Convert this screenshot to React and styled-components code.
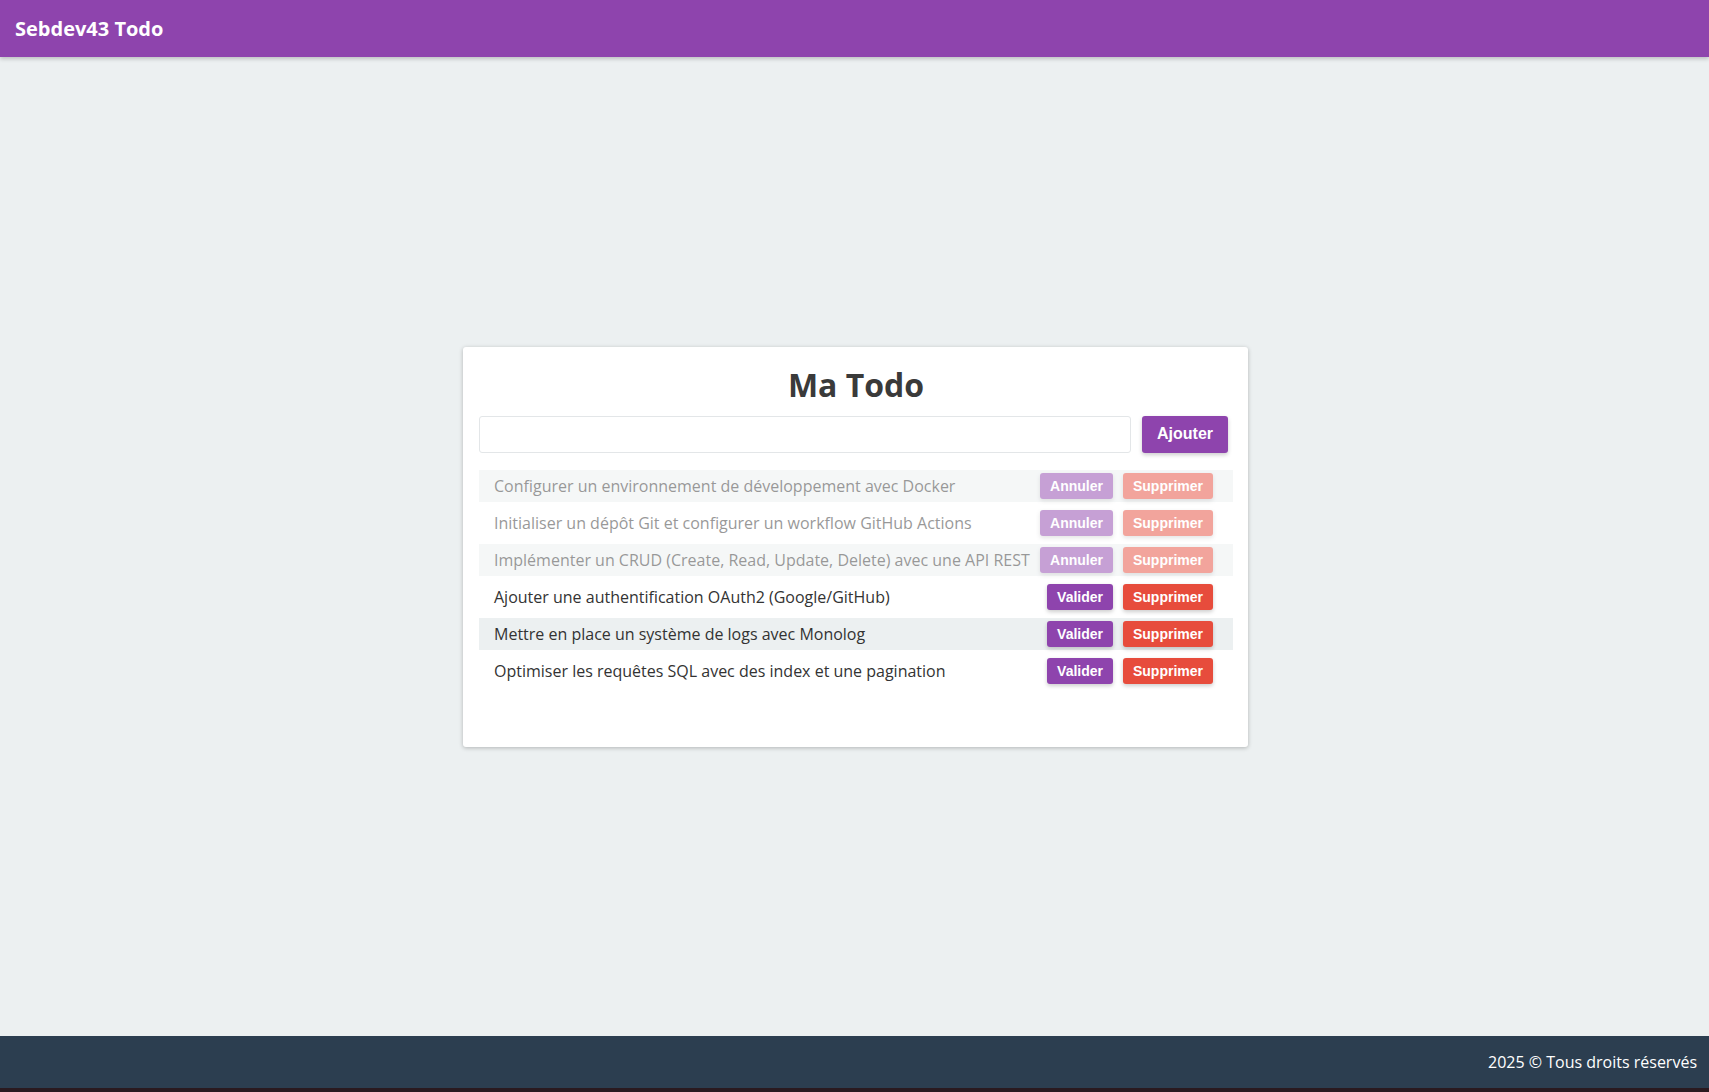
import React, { useState } from 'react';
import styled, { createGlobalStyle } from 'styled-components';

const GlobalStyle = createGlobalStyle`
    html, body {
        margin: 0;
        padding: 0;
        height: 100%;
    }
    body {
        font-family: 'Open Sans', 'Noto Sans', sans-serif;
        background-color: #ecf0f1;
        color: #333;
    }
    #root {
        height: 100%;
    }
`

const Page = styled.div`
    display: flex;
    flex-direction: column;
    height: 100vh;
`

const Header = styled.header`
    height: 57px;
    background-color: #8e44ad;
    display: flex;
    align-items: center;
    padding: 0 15px;
    box-shadow: 0 2px 4px rgba(0, 0, 0, 0.2);
    flex-shrink: 0;
    position: relative;
    z-index: 1;
`

const Brand = styled.h1`
    margin: 0;
    color: #fff;
    font-size: 20px;
    font-weight: 700;
`

const Main = styled.main`
    flex: 1;
    display: flex;
    align-items: center;
    justify-content: center;
    padding-left: 2px;
`

const Card = styled.section`
    width: 785px;
    min-height: 400px;
    box-sizing: border-box;
    background-color: #fff;
    border-radius: 3px;
    box-shadow: 0 1px 4px rgba(0, 0, 0, 0.25);
    padding: 16px 15px 20px 16px;
`

const Title = styled.h2`
    margin: 0 0 10px;
    text-align: center;
    font-size: 32px;
    font-weight: 700;
    color: #3a3a3a;
    line-height: 43px;
`

const Form = styled.form`
    display: flex;
    align-items: stretch;
    gap: 11px;
    margin-bottom: 17px;
    padding-right: 5px;
`

const Input = styled.input`
    flex: 1;
    height: 37px;
    box-sizing: border-box;
    border: 1px solid #e3e6e8;
    border-radius: 3px;
    padding: 0 10px;
    font-family: 'Open Sans', sans-serif;
    font-size: 16px;
    outline: none;
`

const Button = styled.button`
    border: none;
    border-radius: 3px;
    color: #fff;
    font-family: 'Liberation Sans', Arial, sans-serif;
    font-weight: 700;
    font-size: ${p => (p.$big ? '16px' : '14px')};
    line-height: 16px;
    padding: ${p => (p.$big ? '0 15px' : '5px 10px')};
    height: ${p => (p.$big ? '37px' : '26px')};
    margin: ${p => (p.$big ? '0' : '0 5px')};
    background-color: ${p => (p.$danger ? '#e74c3c' : '#8e44ad')};
    box-shadow: 0 2px 4px rgba(0, 0, 0, 0.2);
    cursor: pointer;
    white-space: nowrap;
`

const List = styled.ul`
    list-style: none;
    margin: 0;
    padding: 0;
    display: flex;
    flex-direction: column;
    gap: 5px;
`

const Item = styled.li`
    display: flex;
    align-items: center;
    height: 32px;
    padding: 0 15px;
    background-color: ${p => (p.$odd ? '#ecf0f1' : '#fff')};
    opacity: ${p => (p.$done ? 0.5 : 1)};
`

const Label = styled.span`
    flex: 1;
    font-size: 16px;
    color: #333;
    white-space: nowrap;
`

const Footer = styled.footer`
    height: 52px;
    flex-shrink: 0;
    background-color: #2c3e50;
    color: #fff;
    display: flex;
    align-items: center;
    justify-content: flex-end;
    padding: 0 12px;
    font-size: 16px;
`

const Strip = styled.div`
    height: 4px;
    flex-shrink: 0;
    background-color: #2a1a20;
`

const initialTodos = [
    { text: 'Configurer un environnement de développement avec Docker', done: true },
    { text: 'Initialiser un dépôt Git et configurer un workflow GitHub Actions', done: true },
    { text: 'Implémenter un CRUD (Create, Read, Update, Delete) avec une API REST', done: true },
    { text: 'Ajouter une authentification OAuth2 (Google/GitHub)', done: false },
    { text: 'Mettre en place un système de logs avec Monolog', done: false },
    { text: 'Optimiser les requêtes SQL avec des index et une pagination', done: false },
];

const App = () => {
    const [todos, setTodos] = useState(initialTodos);
    const [value, setValue] = useState('');

    const add = (e) => {
        e.preventDefault();
        if (!value.trim()) return;
        setTodos([...todos, { text: value.trim(), done: false }]);
        setValue('');
    };

    const toggle = (i) => setTodos(todos.map((t, j) => (j === i ? { ...t, done: !t.done } : t)));
    const remove = (i) => setTodos(todos.filter((_, j) => j !== i));

    return (
        <Page>
            <GlobalStyle />
            <Header>
                <Brand>Sebdev43 Todo</Brand>
            </Header>
            <Main>
                <Card>
                    <Title>Ma Todo</Title>
                    <Form onSubmit={add}>
                        <Input value={value} onChange={e => setValue(e.target.value)} />
                        <Button $big type="submit">Ajouter</Button>
                    </Form>
                    <List>
                        {todos.map((t, i) => (
                            <Item key={i} $odd={i % 2 === 0} $done={t.done}>
                                <Label>{t.text}</Label>
                                <Button onClick={() => toggle(i)}>{t.done ? 'Annuler' : 'Valider'}</Button>
                                <Button $danger onClick={() => remove(i)}>Supprimer</Button>
                            </Item>
                        ))}
                    </List>
                </Card>
            </Main>
            <Footer>2025 © Tous droits réservés</Footer>
            <Strip />
        </Page>
    );
};

export default App;
